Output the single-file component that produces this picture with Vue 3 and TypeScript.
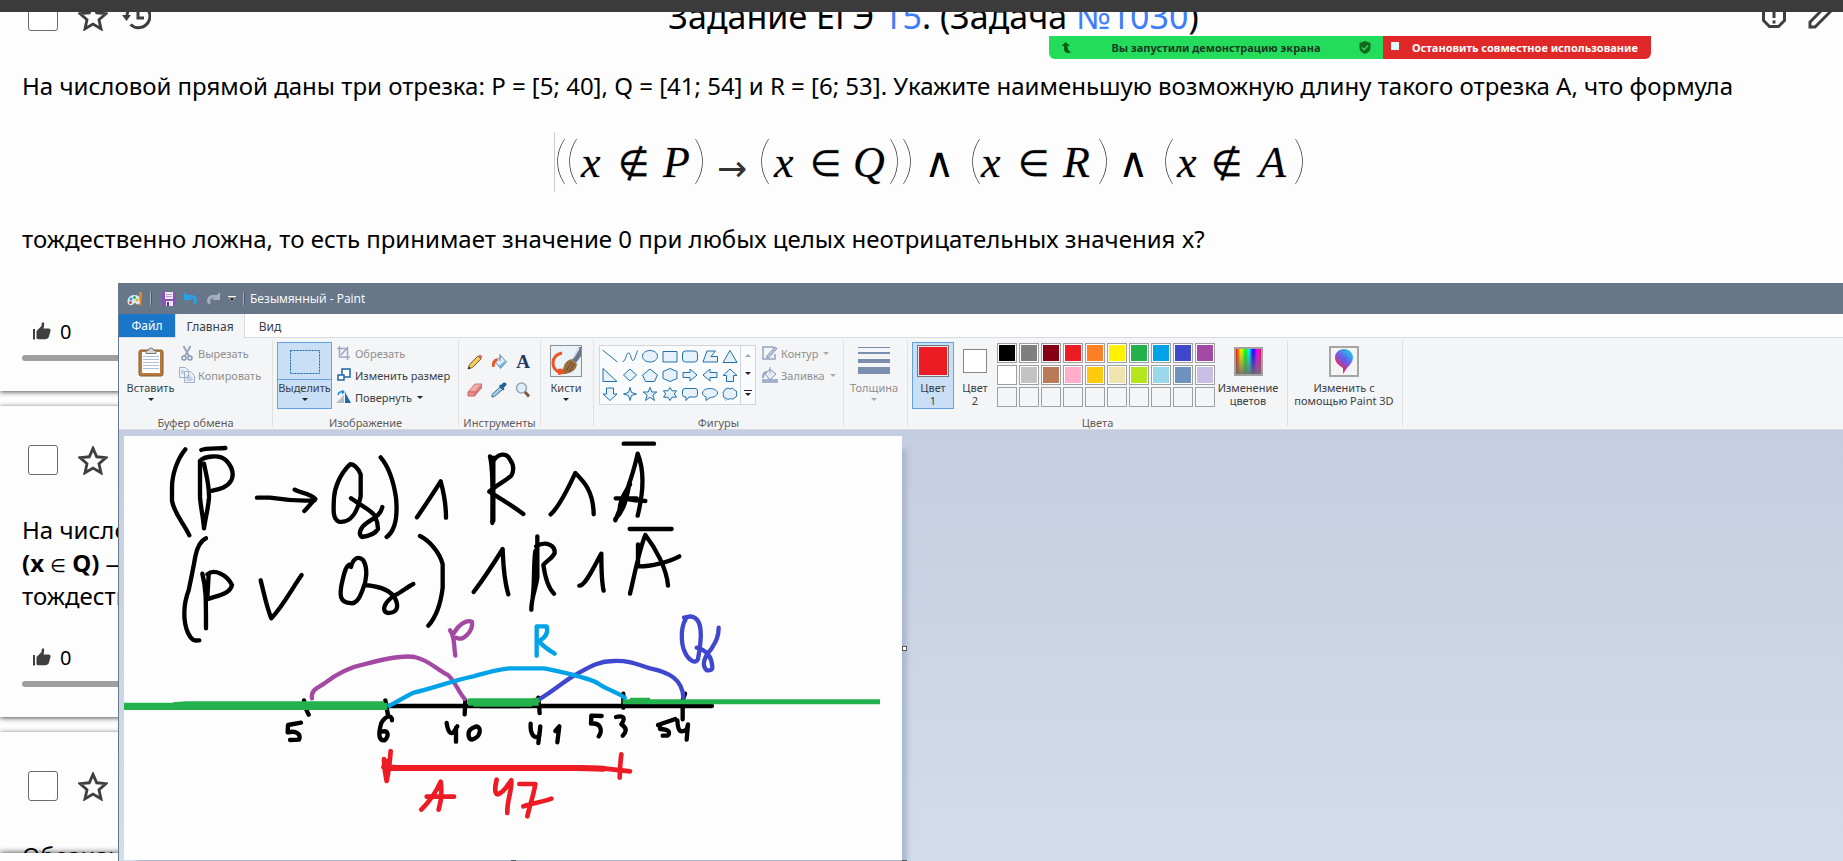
<script setup lang="ts">
interface Glyph {
  x: number
  text: string
  kind: 'var' | 'op' | 'and' | 'arrow' | 'paren'
}

interface Task {
  id: number
  lines: { text: string; bold?: string; op?: string }[]
  likes: number
}

const baseline: Record<Glyph['kind'], number> = { var: 45, op: 44, and: 45, arrow: 49, paren: 46 }

const formula: Glyph[] = [
  { x: 0, text: '(', kind: 'paren' },
  { x: 12, text: '(', kind: 'paren' },
  { x: 27, text: 'x', kind: 'var' },
  { x: 64, text: '∉', kind: 'op' },
  { x: 109, text: 'P', kind: 'var' },
  { x: 139, text: ')', kind: 'paren' },
  { x: 163, text: '→', kind: 'arrow' },
  { x: 204, text: '(', kind: 'paren' },
  { x: 220, text: 'x', kind: 'var' },
  { x: 256, text: '∈', kind: 'op' },
  { x: 299, text: 'Q', kind: 'var' },
  { x: 334, text: ')', kind: 'paren' },
  { x: 347, text: ')', kind: 'paren' },
  { x: 370, text: '∧', kind: 'and' },
  { x: 415, text: '(', kind: 'paren' },
  { x: 427, text: 'x', kind: 'var' },
  { x: 464, text: '∈', kind: 'op' },
  { x: 509, text: 'R', kind: 'var' },
  { x: 543, text: ')', kind: 'paren' },
  { x: 564, text: '∧', kind: 'and' },
  { x: 608, text: '(', kind: 'paren' },
  { x: 623, text: 'x', kind: 'var' },
  { x: 657, text: '∉', kind: 'op' },
  { x: 705, text: 'A', kind: 'var' },
  { x: 739, text: ')', kind: 'paren' },
]

const tasks: Task[] = [
  {
    id: 2,
    lines: [{ text: 'На число' }, { text: ' —', bold: '(x', op: 'Q)' }, { text: 'тождеств' }],
    likes: 0,
  },
  { id: 3, lines: [{ text: 'Обозначим' }], likes: 0 },
]

const shapes: string[] = [
  'M.5 1 15.5 13',
  'M.5 12.5C4 12.5 4 4 6.500 4S9 12 11 11.500 14 5 15.500 1.500',
  'M8 1.500c4.200 0 7.500 2.400 7.500 5.700S12.200 13 8 13 .5 10.500.5 7.200 3.800 1.500 8 1.500Z',
  'M1 2.500h14v10.500H1Z',
  'M3.500 2h9a3 3 0 0 1 3 3v5a3 3 0 0 1-3 3h-9a3 3 0 0 1-3-3V5a3 3 0 0 1 3-3Z',
  'M1 13 5 2h8.500L9 7.500h6.500V13Z',
  'M8 1.500 15 13.500H1Z',
  'M1 .5V13.500h14Z',
  'M8 1 14.500 7 8 13 1.500 7Z',
  'M8 1 15.500 7 12.500 13.500h-9L.5 7Z',
  'M8 .5 15 3.500v7L8 13.500 1 10.500v-7Z',
  'M1 4.500h7V1l7 6-7 6V9.500H1Z',
  'M15 4.500H8V1L1 7l7 6V9.500h7Z',
  'M8 1 15 7.500h-3.500v6h-7v-6H1Z',
  'M4.500 1h7v6H15L8 13.500 1 7h3.500Z',
  'M8 .5 9.500 5.500 14.500 7 9.500 8.500 8 13.500 6.500 8.500 1.500 7l5-1.500Z',
  'M8 .5 9.800 5h5L10.800 8.200 12.500 13.500 8 10.300 3.500 13.500 5.200 8.200 1.200 5h5Z',
  'M8 .5 10 3.800h4.500L12.300 7l2.200 3.200H10L8 13.500 6 10.200H1.500L3.700 7 1.500 3.800H6Z',
  'M3 1.500h10a2.500 2.500 0 0 1 2.500 2.500v3.500A2.500 2.500 0 0 1 13 10H7l-3 3.500V10H3A2.500 2.500 0 0 1 .5 7.500V4A2.500 2.500 0 0 1 3 1.500Z',
  'M8 1.500c4.200 0 7.500 1.900 7.500 4.500S12.200 10.500 8 10.500L4 13.500V9.800C2 9 .5 7.700.5 6 .5 3.400 3.800 1.500 8 1.500Z',
  'M4 2q2-2 4 0 3-2 4.500 1 3 .5 2 3.500 1.500 3-1.500 4Q11 13.500 8.500 11.500 5 13.500 4 11 .5 11 1.500 7.500 0 4.500 2.500 4 2 2.500 4 2ZM3 12.500l1 1',
]

const palette: string[][] = [
  ['#000000', '#7f7f7f', '#880015', '#ed1c24', '#ff7f27', '#fff200', '#22b14c', '#00a2e8', '#3f48cc', '#a349a4'],
  ['#ffffff', '#c3c3c3', '#b97a57', '#ffaec9', '#ffc90e', '#efe4b0', '#b5e61d', '#99d9ea', '#7092be', '#c8bfe7'],
  ['', '', '', '', '', '', '', '', '', ''],
]

const starPath =
  'M12 3.500l2.600 5.900 6.500.6-4.900 4.300 1.400 6.300L12 17.300 6.400 20.600l1.400-6.300L2.900 10l6.500-.6z'
const thumbPath =
  'M0 7h2v10.500H0ZM3.500 16.500V9L8.500 4Q8.500 .2 10 .2 11.700.4 11 4L10.500 6.500H16Q18 6.800 17.600 8.600L16 14.500Q15 17.300 12 17.300H6Q4 17.300 3.500 16.500Z'
</script>

<template>
  <div class="screen">
    <div class="topbar"></div>

    <main class="feed">
      <article class="card">
        <header class="card-head">
          <input type="checkbox" class="check" aria-label="Выбрать задачу 1030" />
          <button class="icon-btn" aria-label="В избранное">
            <svg class="star" viewBox="1.500 2 21 20"><path :d="starPath" /></svg>
          </button>
          <button class="icon-btn history" aria-label="История">
            <svg viewBox="0 0 29 29" width="29" height="29">
              <path d="M5 16V13a11.500 11.500 0 1 1 3.500 9.500" />
              <path d="M16 8v8h6" />
              <path class="solid" d="M0 13h9l-4.500 6z" />
            </svg>
          </button>
          <h1 class="title">
            Задание ЕГЭ <a href="#15">15</a>. (Задача <a href="#1030">№1030</a>)
          </h1>
          <div class="head-tools">
            <button class="icon-btn" aria-label="Сообщить об ошибке">
              <svg viewBox="0 0 24 24" width="24" height="24">
                <path d="M7.500 1.500h9l6 6v9l-6 6h-9l-6-6v-9z" />
                <path d="M12 5v9M12 16.500v3" />
              </svg>
            </button>
            <button class="icon-btn" aria-label="Редактировать">
              <svg viewBox="0 0 26 26" width="26" height="26">
                <path d="M2 24v-5L19 2l5 5L7 24z" />
              </svg>
            </button>
          </div>
        </header>
        <p class="text">
          На числовой прямой даны три отрезка: P = [5; 40], Q = [41; 54] и R = [6; 53]. Укажите наименьшую возможную
          длину такого отрезка A, что формула
        </p>
        <div class="formula">
          <svg viewBox="0 0 752 62" width="752" height="62">
            <path class="caret" d="M.5 0v60" />
            <text v-for="(g, i) in formula" :key="i" :class="g.kind" :x="g.x" :y="baseline[g.kind]">{{ g.text }}</text>
          </svg>
        </div>
        <p class="text">тождественно ложна, то есть принимает значение 0 при любых целых неотрицательных значения x?</p>
        <div class="foot first">
          <button class="like"><svg viewBox="0 0 18 18" width="18" height="18"><path :d="thumbPath" /></svg><span>0</span></button>
          <div class="rate"></div>
        </div>
      </article>

      <article v-for="t in tasks" :key="t.id" class="card">
        <header class="card-head">
          <input type="checkbox" class="check" :aria-label="'Выбрать задачу ' + t.id" />
          <button class="icon-btn" aria-label="В избранное">
            <svg class="star" viewBox="1.500 2 21 20"><path :d="starPath" /></svg>
          </button>
        </header>
        <p v-for="(l, i) in t.lines" :key="i" class="text">
          <template v-if="l.bold"><b>{{ l.bold }}</b> <span class="member">∈</span> <b>{{ l.op }}</b></template>{{ l.text }}
        </p>
        <div class="foot">
          <button class="like"><svg viewBox="0 0 18 18" width="18" height="18"><path :d="thumbPath" /></svg><span>{{ t.likes }}</span></button>
          <div class="rate"></div>
        </div>
      </article>
    </main>

    <div class="bottombar"></div>

    <div class="share">
      <div class="share-on">
        <svg viewBox="0 0 12 12" width="12" height="12"><path d="M4.500 0 9 4H6.500Q6.500 8 10 10.500 4.500 12 3 8V4H.5z" fill="#0c5c10" /></svg>
        <span>Вы запустили демонстрацию экрана</span>
        <svg viewBox="0 0 12 13" width="12" height="13">
          <path d="M6 0 11.500 2V6.500Q11.500 11 6 13 .5 11 .5 6.500V2z" fill="#14691e" />
          <path d="M3 6.500 5.200 8.700 9 4.500" fill="none" stroke="#24dc5c" stroke-width="1.500" />
        </svg>
      </div>
      <button class="share-stop"><i></i><span>Остановить совместное использование</span></button>
    </div>

    <section class="paint">
      <div class="titlebar">
        <svg viewBox="0 0 16 16" width="16" height="16">
          <path d="M7 4C3 4 .5 7 .5 10.500S3 14.500 5 14s1.500-2 3-2 1 2 3 1.500 3.500-2 3-5S11 4 7 4z" fill="#d6ecf8" />
          <circle cx="4" cy="8" r="1.500" fill="#2f9be0" /><circle cx="7.500" cy="6.500" r="1.500" fill="#3fae49" />
          <circle cx="3.500" cy="11.500" r="1.500" fill="#e04b2a" /><circle cx="10" cy="9" r="1.500" fill="#f2b21c" />
          <path d="M12 1h3v4l-1 10h-1L12 5z" fill="#e98324" />
        </svg>
        <i class="bar"></i>
        <button class="quick" aria-label="Сохранить">
          <svg viewBox="0 0 14 14" width="14" height="14">
            <path d="M0 0h14v14H0z" fill="#8655b5" /><path d="M3 0h8v7H3zM4 9h7v5H4z" fill="#f0e8f8" />
            <path d="M4 2h6v1H4zM4 4h6v1H4z" fill="#b89ad6" /><path d="M5 10h2v4H5z" fill="#5c2f90" />
          </svg>
        </button>
        <button class="quick" aria-label="Отменить">
          <svg viewBox="0 0 14 14" width="14" height="14">
            <path d="M3 4.500h4.500a4 4 0 0 1 2.500 7" fill="none" stroke="#28a0ea" stroke-width="3" />
            <path d="M0 0v8h8z" fill="#28a0ea" />
          </svg>
        </button>
        <button class="quick" aria-label="Вернуть">
          <svg viewBox="0 0 14 14" width="14" height="14">
            <path d="M11 4.500H6.500a4 4 0 0 0-2.500 7" fill="none" stroke="#a4afc0" stroke-width="3" />
            <path d="M14 0v8H6z" fill="#a4afc0" />
          </svg>
        </button>
        <button class="quick more" aria-label="Настройка панели">
          <svg viewBox="0 0 8 6" width="8" height="6"><path d="M0 0h8v1H0z" fill="#fff" /><path d="M1 2h6L4 5.500z" fill="#111" stroke="#fff" stroke-width=".5" /></svg>
        </button>
        <i class="bar"></i>
        <span class="caption">Безымянный - Paint</span>
      </div>

      <nav class="tabs">
        <button class="tab file">Файл</button>
        <button class="tab active">Главная</button>
        <button class="tab">Вид</button>
      </nav>

      <div class="ribbon">
        <div class="group g-clip">
          <div class="body">
            <button class="big">
              <span class="pic">
                <svg viewBox="0 0 26 31" width="26" height="31">
                  <rect x="1" y="4" width="24" height="26" rx="2" fill="#b57b3c" stroke="#8a5a28" />
                  <path d="M4 6h18v21H4z" fill="#fff" /><path d="M5 10.500h16M5 13.500h16M5 16.500h16M5 19.500h16M5 22.500h16" stroke="#a9c0d8" />
                  <path d="M8 4.500h2.500a2.500 2.500 0 0 1 5 0H18v3H8z" fill="#d8d8d8" stroke="#777" />
                </svg>
              </span>
              <span>Вставить</span><i class="arr"></i>
            </button>
            <div class="col">
              <button class="row off">
                <svg viewBox="0 0 16 16" width="16" height="16"><path d="M4.500 1 10 11M11.500 1 6 11" fill="none" stroke="#9ba9c0" stroke-width="2" /><circle cx="5" cy="13" r="2" fill="none" stroke="#8497b5" stroke-width="1.500" /><circle cx="11" cy="13" r="2" fill="none" stroke="#8497b5" stroke-width="1.500" /></svg>
                Вырезать
              </button>
              <button class="row off">
                <svg viewBox="0 0 16 16" width="16" height="16"><path d="M.5.5h6l3 3v7h-9zM5.500 4.500h6l4 4v7h-10z" fill="#edf1f8" stroke="#9dafcb" /><path d="M2 4h3M2 6h3M7.500 9h4M7.500 11h6M7.500 13h6" stroke="#9dafcb" /></svg>
                Копировать
              </button>
            </div>
          </div>
          <div class="name">Буфер обмена</div>
        </div>

        <div class="group g-image">
          <div class="body">
            <button class="big select">
              <span class="pic"><svg viewBox="0 0 32 26" width="32" height="26"><rect x="1.500" y="1.500" width="29" height="23" fill="none" stroke="#1d66a8" stroke-dasharray="2 1" /></svg></span>
              <span>Выделить</span><i class="arr"></i>
            </button>
            <div class="col">
              <button class="row off">
                <svg viewBox="0 0 16 16" width="16" height="16"><path d="M3.500 1v11H14M1 3.500h10.500V15M5 10l7-8" fill="none" stroke="#9aa9c2" stroke-width="1.500" /></svg>
                Обрезать
              </button>
              <button class="row">
                <svg viewBox="0 0 16 16" width="16" height="16"><rect x="6" y="2" width="8" height="8" fill="#fff" stroke="#1d66a8" stroke-width="1.500" /><rect x="2" y="8" width="6" height="5" fill="#fff" stroke="#1d66a8" stroke-width="1.500" /></svg>
                Изменить размер
              </button>
              <button class="row">
                <svg viewBox="0 0 16 16" width="16" height="16"><path d="M0 14h8V6z" fill="#b9bdc2" /><path d="M9 14V3l6 11z" fill="#1d6cae" /><path d="M2 6Q3 2 7 3" fill="none" stroke="#1d8be0" stroke-width="1.500" /><path d="M6 .5v5l3-2.500z" fill="#1d8be0" /></svg>
                Повернуть <i class="arr"></i>
              </button>
            </div>
          </div>
          <div class="name">Изображение</div>
        </div>

        <div class="group g-tools">
          <div class="body">
            <div class="tool-grid">
              <button aria-label="Карандаш"><svg viewBox="0 0 16 16"><path d="M1 15 2.500 10.500 11 2l3 3-8.500 8.500z" fill="#f4c95d" stroke="#77602c" /><path d="M11 2l2-1.500 2.500 2.500L14 5z" fill="#d8665c" /><path d="M1 15l.8-2.500 1.700 1.700z" fill="#222" /></svg></button>
              <button aria-label="Заливка"><svg viewBox="0 0 16 16"><path d="M4.500 8 10 2l5.500 6-6 6.500z" fill="#dcecf8" stroke="#5b92bd" /><path d="M1 13Q0 6 6 4l1 2Q4 8 3.500 13z" fill="#e55c2c" /><path d="M9 0v7" stroke="#778" /><path d="M15 8l-5.500 6-2-2L14 7z" fill="#6fb0dc" /></svg></button>
              <button class="letter" aria-label="Текст">A</button>
              <button aria-label="Ластик"><svg viewBox="0 0 16 16"><path d="M1 10 8 2h7l-7 8z" fill="#f3aaa6" stroke="#c77" /><path d="M8 10l7-8v4l-7 8z" fill="#d27a78" /><path d="M1 10h7v4H1z" fill="#e98f8b" stroke="#c66" /></svg></button>
              <button aria-label="Палитра"><svg viewBox="0 0 16 16"><path d="M1 15v-2.500L9 5l2.500 2.500-8 7z" fill="#9cd0f0" stroke="#467" /><path d="M8 4l4.500 4.500 1-1.500-1-1 3-3q.5-3-3-2.500L10 3 9 2.500z" fill="#24609c" /></svg></button>
              <button aria-label="Масштаб"><svg viewBox="0 0 16 16"><circle cx="6.500" cy="6" r="5" fill="#ddeefb" stroke="#98a6b6" stroke-width="1.500" /><path d="M10 10l4 4.500" stroke="#7a5a44" stroke-width="3" /></svg></button>
            </div>
          </div>
          <div class="name">Инструменты</div>
        </div>

        <div class="group g-brush">
          <div class="body">
            <button class="big">
              <span class="pic">
                <svg viewBox="0 0 32 32" width="32" height="32">
                  <rect x=".5" y=".5" width="31" height="31" fill="#eaf3f8" stroke="#8c9196" />
                  <path d="M12 8Q3 10 3 18T12 28" fill="none" stroke="#ea5526" stroke-width="3" /><path d="M8 24Q12 22 18 28L8 30z" fill="#ea5526" />
                  <path d="M22 15 29 2h2v9l-5 7z" fill="#68768a" /><path d="M23 13l6-10" stroke="#d8dee6" stroke-width="2" />
                  <path d="M13 29Q12 17 21 14l6 5Q26 28 13 29z" fill="#9a6e3c" /><path d="M16 26l6-9M19 27l5-8" stroke="#6d4a24" />
                </svg>
              </span>
              <span>Кисти</span><i class="arr"></i>
            </button>
          </div>
        </div>

        <div class="group g-shapes">
          <div class="body">
            <div class="gallery">
              <div class="shape-grid">
                <button v-for="(s, i) in shapes" :key="i" :aria-label="'Фигура ' + (i + 1)">
                  <svg viewBox="0 0 16 14" width="16" height="14"><path :d="s" /></svg>
                </button>
              </div>
              <div class="scroller">
                <button aria-label="Вверх"><i class="arr up"></i></button>
                <button aria-label="Вниз"><i class="arr"></i></button>
                <button class="all" aria-label="Все фигуры"><i class="arr"></i></button>
              </div>
            </div>
            <div class="col">
              <button class="row off">
                <svg viewBox="0 0 16 16" width="16" height="16"><path d="M12 2H1v12h12V9" fill="none" stroke="#93a4c0" stroke-width="1.500" /><path d="M4 12 13 2l2 1.500L6.500 13z" fill="#b8c5da" stroke="#8799b8" /></svg>
                Контур <i class="arr"></i>
              </button>
              <button class="row off">
                <svg viewBox="0 0 16 16" width="16" height="16"><path d="M0 12h16v4H0z" fill="#a3b2cc" /><path d="M3 7l5-5 6 5-6 6z" fill="#e2e9f3" stroke="#8799b8" /><path d="M1 11Q1 5 5 5" fill="none" stroke="#93a4c0" stroke-width="2" /><path d="M8 0v6" stroke="#8799b8" /></svg>
                Заливка <i class="arr"></i>
              </button>
            </div>
          </div>
          <div class="name">Фигуры</div>
        </div>

        <div class="group g-width">
          <div class="body">
            <button class="big off">
              <span class="pic"><svg viewBox="0 0 32 28" width="32" height="28"><path d="M0 0h32v1H0zM0 5h32v2H0zM0 12h32v4H0zM0 20h32v7H0z" fill="#7b8eae" /></svg></span>
              <span>Толщина</span><i class="arr"></i>
            </button>
          </div>
        </div>

        <div class="group g-colors">
          <div class="body">
            <button class="big color selected"><span class="pic"><i class="sw one"></i></span><span>Цвет</span><span>1</span></button>
            <button class="big color"><span class="pic"><i class="sw two"></i></span><span>Цвет</span><span>2</span></button>
            <div class="palette">
              <template v-for="(r, ri) in palette" :key="ri">
                <button v-for="(c, ci) in r" :key="ci" :class="{ empty: !c }" :style="{ backgroundColor: c }" :aria-label="'Цвет ' + (ri * 10 + ci + 1)"></button>
              </template>
            </div>
            <button class="big edit"><span class="pic"><i class="rainbow"></i></span><span>Изменение</span><span>цветов</span></button>
          </div>
          <div class="name">Цвета</div>
        </div>

        <div class="group g-3d">
          <div class="body">
            <button class="big">
              <span class="pic">
                <svg viewBox="0 0 30 31" width="30" height="31">
                  <defs>
                    <linearGradient id="drop" x1="0" y1="1" x2=".7" y2="0"><stop offset="0" stop-color="#f7b21c" /><stop offset=".3" stop-color="#e8265c" /><stop offset=".6" stop-color="#7a56e8" /><stop offset="1" stop-color="#18c4ee" /></linearGradient>
                  </defs>
                  <rect x="1" y="1" width="28" height="29" fill="#f5f4f5" stroke="#a6a6a6" stroke-width="2" />
                  <path d="M15 3c5 0 9 4 9 8.500 0 6-6 9-10 16.500V22c-3-2-8-5-8-10.500C6 7 10 3 15 3z" fill="url(#drop)" />
                  <path d="M11 12q4-4 8 0l-5 7z" fill="#4c62e8" opacity=".6" />
                </svg>
              </span>
              <span>Изменить с</span><span>помощью Paint 3D</span>
            </button>
          </div>
        </div>
      </div>

      <div class="workspace">
        <div class="sheet">
          <svg class="ink" viewBox="12 15 2334 1272">
            <g class="black">
              <path d="M196 55C172 84 156 130 156 170V210C164 250 188 272 208 313M244 57C256 50 290 53 316 51" />
              <path d="M240 90V200C244 240 250 262 252 292M240 90C252 76 300 68 320 90 340 112 342 130 334 148 322 170 300 174 272 180M252 98C258 130 268 160 267 200 265 232 258 250 252 292" />
              <path d="M411 200H450C500 208 540 210 584 208M524 176C540 186 570 186 586 204 576 212 566 228 553 240" />
              <path d="M690 100C660 128 644 170 642 200 640 240 638 262 656 272 690 278 712 246 722 196V130C716 112 700 98 690 100M693 202C720 222 752 236 764 254 772 270 774 280 774 294 764 310 742 316 726 318 714 310 720 290 740 276 768 258 782 250 787 228" />
              <path d="M782 79C810 112 822 160 828 200 834 262 824 300 800 318M891 259C916 222 944 180 962 151 970 180 978 220 978 260" />
              <path d="M258 322C240 330 232 348 226 376 220 410 214 440 206 478 190 520 188 570 204 606 218 634 228 628 238 628M247 428C258 470 258 500 258 592M262 430C282 412 320 430 336 462 330 490 290 494 264 504M266 430 262 500" />
              <path d="M422 448C432 486 440 530 454 562C490 524 520 466 545 432M693 408C700 380 716 374 730 388 744 412 740 450 728 476 716 508 706 520 690 516 660 514 656 494 668 446 674 420 680 400 692 400M736 462C772 466 800 472 822 496 836 520 838 546 804 546 780 540 796 510 826 492 846 482 862 468 880 459" />
              <path d="M900 315C930 330 960 366 968 400V470C962 520 946 560 925 584M1061 483C1092 442 1122 396 1148 354 1150 400 1150 440 1165 490" />
            </g>
            <g class="black" transform="translate(1080 0)">
              <path d="M30 76C38 110 38 160 37 276M40 90C54 66 80 64 90 86 104 104 100 124 94 134 76 150 50 162 28 182M28 182C60 202 100 226 130 249M40 80V270" />
              <path d="M212 250C240 226 270 160 286 126 312 152 340 180 341 250M431 38H522" />
              <path d="M473 68C462 120 434 200 406 268M473 68C490 110 494 170 473 254M407 202H470M430 200C450 208 470 208 496 210M406 264C430 240 438 210 446 170M418 246C418 210 432 190 450 160" />
              <path d="M172 316V440C166 480 154 500 154 536M168 346C200 328 226 344 224 366 216 384 198 390 190 402 194 430 204 470 222 488M166 360C160 400 164 460 158 500" />
              <path d="M298 464C316 464 340 410 364 368 364 400 364 450 371 479M449 294H575M450 488C462 440 476 360 496 312 524 348 560 410 564 464M474 340V400M470 406C510 408 570 392 598 376" />
            </g>
            <g class="black" transform="translate(0 540)">
              <path d="M755 285H1200M552 268 556 290 566 311M796 268 804 312M1036 268 1034 310" />
              <path d="M543 335 504 342 503 364C530 358 544 370 537 386L510 387M816 328C816 310 796 314 784 336 774 370 776 390 794 388 808 374 806 356 784 362M980 336C984 364 992 372 1002 362L1012 346M1008 350V392M1056 352C1040 360 1044 384 1056 386 1082 378 1086 350 1070 346L1056 352" />
            </g>
            <g class="black" transform="translate(1080 540)">
              <path d="M0 285H696M175 260 179 306M430 248V290M615 248 608 268V325" />
              <path d="M152 338C150 372 164 386 178 374L181 346 175 396M226 360 238 346 232 394M365 315 334 314 333 338C364 334 368 360 356 376M408 318C430 312 438 320 424 340 444 352 438 364 428 374M534 342 586 324M540 342V354C570 354 572 368 562 374H548M592 328C594 364 602 366 620 356L624 340 620 386" />
            </g>
            <g class="green" transform="translate(0 540)">
              <path d="M0 286H802" /><path d="M160 285 200 282H792" /><path d="M1044 273H1256M1060 276H1236" />
            </g>
            <path class="green thin" d="M1240 808H1260M1508 812H2280M1530 808H1590" />
            <g class="violet" transform="translate(0 540)">
              <path d="M576 262C572 236 594 230 612 218 640 196 680 170 740 158 800 142 850 132 884 138 928 148 950 176 984 192 1006 212 1016 244 1034 264" />
              <path d="M990 58C1006 80 1000 100 1006 134M1002 66C1018 38 1040 26 1056 32 1060 60 1030 92 1008 80" />
            </g>
            <g class="blue" transform="translate(1080 540)"><path d="M182 262C220 240 240 220 278 196 320 174 350 150 400 150 450 148 470 160 510 172 570 184 606 206 610 258" /><path d="M618 22C596 60 608 110 614 122 626 150 648 160 654 144 666 80 670 20 632 16L612 20M650 110C674 116 690 132 694 150 698 170 702 180 680 178 662 162 676 132 694 114 706 94 716 80 716 50" /></g>
            <g class="cyan" transform="translate(0 540)"><path d="M808 284C830 274 860 254 884 244 920 238 1000 208 1060 196 1100 186 1140 172 1172 172H1272C1300 178 1400 198 1432 216 1460 236 1490 242 1514 260" /></g>
            <g class="cyan" transform="translate(1080 540)"><path d="M170 46V134M170 46H200C206 70 194 82 176 90 190 106 204 116 224 128" /></g>
            <g class="red" transform="translate(0 540)">
              <path class="wide" d="M812 471H1376L1450 473" />
              <path d="M1374 470 1450 472 1530 481M812 420C810 450 806 480 800 510M792 444C792 470 794 480 800 510M790 468H826M802 450V500" />
              <path d="M904 596C930 570 950 540 962 512 966 540 964 570 956 596M920 557H1002M1130 506C1124 530 1124 548 1132 550 1154 546 1166 516 1174 508 1176 540 1160 570 1162 606" />
            </g>
            <g class="red" transform="translate(1080 540)"><path d="M424 430C420 460 420 480 419 500M118 519H166C160 556 150 580 142 616M130 586C156 576 186 574 214 563" /></g>
          </svg>
          <i class="grip right"></i><i class="grip bottom"></i><i class="grip corner"></i>
        </div>
      </div>
    </section>
  </div>
</template>

<style>
html,
body {
  height: 100%;
  overflow: hidden;
}
#app {
  height: 100%;
}
</style>

<style scoped>
* {
  box-sizing: border-box;
}
button {
  border: 0;
  padding: 0;
  background: none;
  color: inherit;
  font: inherit;
}
.screen {
  position: relative;
  height: 100vh;
  overflow: hidden;
  background: #fdfdfd;
  color: #000;
  font-family: 'Noto Sans', 'Open Sans', sans-serif;
}
.topbar {
  position: relative;
  z-index: 3;
  height: 12px;
  background: #3b3b3b;
}
.feed {
  display: flex;
  flex-direction: column;
  gap: 15px;
  margin-top: -50px;
}
.card {
  padding: 39px 22px 30px;
  background: #fdfdfd;
  box-shadow: 0 1px 5px rgba(0, 0, 0, 0.7);
}
.card-head {
  display: flex;
  align-items: center;
  height: 30px;
  margin-bottom: 38px;
  padding-left: 6px;
}
.check {
  appearance: none;
  width: 30px;
  height: 30px;
  margin: 0 20px 0 0;
  border: 1px solid #6a6a6a;
  border-radius: 3px;
  background: #fff;
}
.icon-btn {
  display: flex;
}
.icon-btn svg {
  fill: none;
  stroke: #3f3f3f;
  stroke-width: 3;
}
.icon-btn .star {
  width: 30px;
  height: 29px;
  stroke-width: 2;
}
.icon-btn .solid {
  fill: #3f3f3f;
  stroke: none;
}
.history {
  margin-left: 14px;
}
.title {
  flex: 1;
  margin: 0;
  padding-right: 46px;
  font-size: 34px;
  font-weight: 400;
  line-height: 44px;
  text-align: center;
}
.title a {
  color: #3f7dfb;
  text-decoration: none;
}
.head-tools {
  display: flex;
  align-items: center;
  gap: 22px;
  margin-right: -13px;
}
.text {
  margin: 0;
  font-size: 24px;
  line-height: 33px;
  white-space: nowrap;
}
.member {
  font: 18px/18px 'DejaVu Sans', sans-serif;
}
.formula {
  display: flex;
  justify-content: center;
  height: 120px;
  padding: 30px 0 0 16px;
}
.formula .var {
  font: italic 44px 'Liberation Serif', serif;
  stroke: #000;
  stroke-opacity: 0.2;
}
.formula .op {
  font: 36px 'DejaVu Sans', sans-serif;
  stroke: #000;
  stroke-opacity: 0.3;
}
.formula .and {
  font: 42px 'DejaVu Sans', sans-serif;
}
.formula .arrow {
  font: 36px 'DejaVu Sans', sans-serif;
  fill: #333;
}
.formula .paren {
  font: 100 52px Lato, sans-serif;
  fill: #222;
}
.formula .caret {
  stroke: #ccc;
}
.foot {
  padding-top: 35px;
}
.foot.first {
  padding-top: 66px;
}
.like {
  display: flex;
  align-items: center;
  gap: 9px;
  height: 20px;
  margin: 0 0 14px 11px;
  font-size: 20px;
}
.like path {
  fill: #3f3f3f;
}
.rate {
  height: 6px;
  border-radius: 3px;
  background: #9f9f9f;
}
.bottombar {
  position: absolute;
  inset: auto 0 0 0;
  height: 8px;
  background: #fdfdfd;
  box-shadow: 0 0 6px rgba(0, 0, 0, 0.8);
}
.share {
  position: absolute;
  z-index: 4;
  top: 36px;
  right: 192px;
  display: flex;
  height: 23px;
  overflow: hidden;
  border-radius: 0 0 6px 6px;
  font-size: 11px;
  font-weight: 700;
  white-space: nowrap;
}
.share-on {
  display: flex;
  align-items: center;
  justify-content: space-between;
  width: 334px;
  padding: 0 12px;
  background: #24dc5c;
  color: #173a22;
}
.share-stop {
  display: flex;
  align-items: center;
  width: 268px;
  padding-left: 8px;
  gap: 13px;
  background: #e02828;
  color: #fff;
}
.share-stop i {
  flex: none;
  width: 8px;
  height: 8px;
  margin-bottom: 4px;
  background: #dff;
}

.paint {
  position: absolute;
  z-index: 2;
  top: 283px;
  right: 0;
  bottom: 0;
  left: 118px;
  display: flex;
  flex-direction: column;
  border-left: 1px solid #687689;
  background: #f4f5f7;
  color: #3a3f46;
  font-size: 11px;
}
.titlebar {
  display: flex;
  flex: none;
  align-items: center;
  height: 31px;
  padding-left: 8px;
  background: #687689;
  color: #fff;
}
.caption {
  font-family: 'Open Sans', 'Noto Sans', sans-serif;
  font-size: 12px;
}
.quick {
  display: flex;
  margin-right: 8px;
}
.more {
  margin-right: 7px;
}
.bar {
  width: 2px;
  height: 13px;
  margin: 0 10px 0 7px;
  border: solid #4e5969;
  border-width: 0 1px 0 0;
  background: #a8b1bd;
}
.more + .bar {
  margin: 0 5px 0 0;
}
.tabs {
  display: flex;
  flex: none;
  height: 24px;
  border-bottom: 1px solid #d9dbde;
  background: #fefefe;
  font-size: 12px;
}
.tab {
  width: 50px;
  height: 24px;
}
.tab.file {
  width: 56px;
  height: 23px;
  background: #1a76c8;
  color: #fff;
}
.tab.active {
  width: 70px;
  border: solid #d9dbde;
  border-width: 0 1px;
  background: #f4f5f7;
}
.ribbon {
  display: flex;
  flex: none;
  height: 92px;
  padding: 2px 0 3px;
  border-bottom: 1px solid #d5d9df;
}
.group {
  display: flex;
  flex: none;
  flex-direction: column;
  border-right: 1px solid #dfe1e5;
}
.body {
  display: flex;
  flex: none;
  height: 72px;
  padding: 2px 4px 0;
}
.name {
  padding-top: 2px;
  line-height: 18px;
  text-align: center;
  color: #5c5c5c;
}
.g-clip {
  width: 154px;
}
.g-image {
  width: 186px;
}
.g-tools {
  width: 82px;
}
.g-brush {
  width: 53px;
}
.g-shapes {
  width: 250px;
}
.g-width {
  width: 64px;
}
.g-colors {
  width: 380px;
}
.g-3d {
  width: 115px;
}
.big {
  display: flex;
  flex: none;
  flex-direction: column;
  align-items: center;
  width: 55px;
  height: 67px;
  line-height: 13px;
  white-space: nowrap;
}
.g-brush .big {
  width: 42px;
}
.g-width .big {
  width: 52px;
}
.g-3d .big {
  width: 104px;
}
.pic {
  display: flex;
  align-items: center;
  justify-content: center;
  height: 38px;
  margin-bottom: 1px;
}
.select {
  border: 1px solid #62a2e4;
  background: linear-gradient(#62a2e4, #62a2e4) 0 36px / 100% 1px no-repeat #c9dff5;
}
.select .pic {
  height: 37px;
}
.arr {
  display: block;
  width: 0;
  height: 0;
  margin-top: 4px;
  border: 3px solid transparent;
  border-top-color: #222;
  border-bottom: 0;
}
.off {
  color: #8f8f8f;
}
.off .arr {
  border-top-color: #aaa;
}
.col {
  display: flex;
  flex-direction: column;
  margin-left: 4px;
}
.g-clip .col {
  margin-left: 1px;
}
.row {
  display: flex;
  align-items: center;
  gap: 3px;
  height: 22px;
  white-space: nowrap;
}
.row .arr {
  margin: 0 0 0 2px;
}
.tool-grid {
  display: grid;
  grid-template-columns: repeat(3, 16px);
  grid-auto-rows: 16px;
  gap: 12px 8px;
  padding: 12px 0 0 4px;
}
.tool-grid button {
  display: flex;
}
.tool-grid .letter {
  align-items: center;
  justify-content: center;
  font: bold 19px/16px 'Liberation Serif', serif;
  color: #1f3b63;
}
.gallery {
  display: flex;
  width: 157px;
  height: 60px;
  margin: 3px 0 0 1px;
  border: 1px solid #d2d5da;
  background: #fafbfc;
}
.g-shapes .col {
  margin-left: 6px;
}
.shape-grid {
  display: grid;
  flex: 1;
  grid-template-columns: repeat(7, 1fr);
}
.shape-grid button {
  display: flex;
  align-items: center;
  justify-content: center;
}
.shape-grid path {
  fill: #e6f1f9;
  stroke: #2170ad;
}
.shape-grid button:nth-child(-n + 2) path {
  fill: none;
}
.scroller {
  display: grid;
  width: 15px;
  border-left: 1px solid #d2d5da;
  justify-items: center;
}
.scroller button {
  display: flex;
  align-items: center;
}
.scroller .arr {
  margin: 0;
}
.scroller .up {
  border: 3px solid transparent;
  border-top: 0;
  border-bottom-color: #aaa;
}
.scroller .all {
  flex-direction: column;
  justify-content: center;
  gap: 2px;
}
.scroller .all::before {
  content: '';
  width: 8px;
  height: 1px;
  background: #222;
}
.color {
  width: 42px;
  margin-right: 1px;
}
.color.selected {
  outline: 1px solid #62a2e4;
  outline-offset: -1px;
  background: #c9dff5;
}
.color + .color {
  width: 40px;
}
.sw {
  width: 24px;
  height: 24px;
  border: 1px solid #858585;
  background: #fff;
}
.sw.one {
  width: 32px;
  height: 32px;
  border-color: #777;
  background: #ed1c24;
  box-shadow: inset 0 0 0 1px #dfe9f3;
}
.palette {
  display: grid;
  grid-template-columns: repeat(10, 20px);
  grid-auto-rows: 20px;
  gap: 2px;
  padding-top: 1px;
  margin-left: 1px;
}
.palette button {
  border: 1px solid #a0a0a0;
  box-shadow: inset 0 0 0 1px #fff;
}
.palette .empty {
  box-shadow: none;
}
.edit {
  width: 62px;
  margin-left: 2px;
}
.rainbow {
  width: 29px;
  height: 29px;
  border: 2px solid #a2a2a2;
  background:
    linear-gradient(rgba(128, 128, 128, 0), rgba(110, 110, 110, 0.9)),
    linear-gradient(90deg, #f00, #ff0 20%, #0f0 38%, #0ff 52%, #00f 68%, #f0f 85%, #f06);
}

.workspace {
  flex: 1;
  overflow: hidden;
  padding: 6px 5px 0;
  background: linear-gradient(#c5cee0, #d2dceb);
}
.sheet {
  position: relative;
  width: 778px;
  height: 424px;
  background: #fdfdfe;
  box-shadow: 9px 9px 5px -4px #a9b8cd;
}
.ink {
  display: block;
  width: 100%;
  height: 100%;
}
.ink path {
  fill: none;
  stroke-width: 13;
  stroke-linecap: round;
  stroke-linejoin: round;
}
.black path {
  stroke: #000;
}
.ink .green path,
.ink path.green {
  stroke: #22b14c;
  stroke-width: 22;
  stroke-linecap: butt;
}
.ink path.thin {
  stroke-width: 15;
}
.violet path {
  stroke: #a349a4;
}
.cyan path {
  stroke: #00a2e8;
}
.blue path {
  stroke: #3f48cc;
}
.ink .red path {
  stroke: #ed1c24;
  stroke-width: 14;
}
.ink .red .wide {
  stroke-width: 18;
}
.grip {
  position: absolute;
  width: 5px;
  height: 5px;
  border: 1px solid #555;
  background: #fff;
}
.grip.right {
  top: 210px;
  left: 778px;
}
.grip.bottom {
  top: 424px;
  left: 387px;
}
.grip.corner {
  top: 424px;
  left: 778px;
}
</style>
